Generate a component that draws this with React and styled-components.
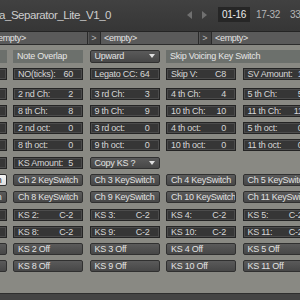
import React from "react";
import styled, { createGlobalStyle, css } from "styled-components";

const GlobalStyle = createGlobalStyle`
  html, body { margin: 0; padding: 0; background: #898983; overflow: hidden; }
`;

const Frame = styled.div`
  width: 300px;
  height: 300px;
  overflow: hidden;
  display: flex;
  flex-direction: column;
  background: #898983;
  font-family: "Liberation Sans", Arial, sans-serif;
`;

const Header = styled.header`
  flex: 0 0 31px;
  box-sizing: border-box;
  padding-bottom: 2px;
  display: flex;
  align-items: center;
  overflow: hidden;
  background: linear-gradient(#414141, #363636);
`;

const Title = styled.div`
  flex: 0 0 187px;
  margin-left: -1px;
  font-size: 11.5px;
  letter-spacing: -0.45px;
  color: #cdcdcd;
  white-space: nowrap;
`;

const Nav = styled.div`
  flex: none;
  display: flex;
  gap: 10px;
  margin-left: 1px;
  svg { display: block; }
`;

const Tabs = styled.div`
  flex: none;
  display: flex;
  gap: 2px;
  margin-left: 11px;
`;

const Tab = styled.div`
  flex: none;
  width: 32px;
  height: 15px;
  display: flex;
  align-items: center;
  justify-content: center;
  font-size: 10px;
  letter-spacing: -0.3px;
  color: ${(p) => (p.$active ? "#ececec" : "#b6b6b6")};
  background: ${(p) => (p.$active ? "#262626" : "transparent")};
`;

const PresetBar = styled.div`
  flex: 0 0 14px;
  box-sizing: border-box;
  display: flex;
  gap: 1px;
  margin-left: -10px;
  border-top: 1px solid #242424;
  border-bottom: 1px solid #2c2c2c;
  background: #2a2a2a;
`;

const PresetField = styled.div`
  flex: 0 0 97px;
  display: flex;
  align-items: center;
  padding-left: 3px;
  box-sizing: border-box;
  background: #5a5a5a;
  color: #e4e4e4;
  font-size: 9px;
  letter-spacing: -0.3px;
  white-space: nowrap;
`;

const PresetArrow = styled.div`
  flex: 0 0 12px;
  display: flex;
  align-items: center;
  justify-content: center;
  background: #444444;
  box-shadow: inset 1px 0 0 #585858;
  color: #b8b8b8;
  font-size: 9px;
`;

const Main = styled.main`
  flex: 1;
  padding-top: 5px;
  overflow: hidden;
`;

const Grid = styled.div`
  display: grid;
  grid-template-columns: repeat(5, 70px);
  column-gap: 6.5px;
  grid-auto-rows: ${(p) => p.$rowH};
  row-gap: ${(p) => p.$gap};
  margin-left: -63.5px;
  margin-top: ${(p) => p.$top || "0"};
`;

const cellBase = css`
  box-sizing: border-box;
  display: flex;
  align-items: center;
  font-size: 9px;
  letter-spacing: -0.25px;
  white-space: nowrap;
  overflow: hidden;
`;

const Value = styled.div`
  ${cellBase};
  justify-content: space-between;
  padding: 0 9px 0 4px;
  background: #363636;
  border: 1px solid #242424;
  box-shadow: inset 0 0 0 1px #4c4c4c;
  color: #d6d6d6;
`;

const Button = styled.div`
  ${cellBase};
  padding-left: 4px;
  border-radius: 2px;
  border: 1px solid #303030;
  background: linear-gradient(#5a5a5a, #474747);
  color: #e2e2e2;
  ${(p) =>
    p.$active &&
    css`
      background: linear-gradient(#f6f6f6, #dedede);
      color: #222;
    `}
`;

const Dropdown = styled(Button)`
  justify-content: space-between;
  padding-right: 4px;
`;

const Label = styled.div`
  ${cellBase};
  padding-left: 4px;
  background: #6c706c;
  color: #e6e6e6;
  ${(p) => p.$span && "grid-column: span 2;"}
`;

const Blank = styled.div``;

const Footer = styled.footer`
  flex: 0 0 7px;
  box-sizing: border-box;
  border-top: 1px solid #2e2e2e;
  background: #444444;
`;

const LeftTri = () => (
  <svg width="5" height="8" viewBox="0 0 5 8">
    <path d="M5 0 L0 4 L5 8 Z" fill="#707070" />
  </svg>
);
const RightTri = () => (
  <svg width="5" height="8" viewBox="0 0 5 8">
    <path d="M0 0 L5 4 L0 8 Z" fill="#707070" />
  </svg>
);
const DownTri = () => (
  <svg width="6" height="4" viewBox="0 0 6 4">
    <path d="M0 0 L6 0 L3 4 Z" fill="#e0e0e0" />
  </svg>
);

const V = ({ l, v }) => (
  <Value>
    <span>{l}</span>
    <span>{v}</span>
  </Value>
);

const ord = ["1 st", "2 nd", "3 rd", "4 th", "5 th"];
const ord2 = ["7 th", "8 th", "9 th", "10 th", "11 th"];
const n1 = [1, 2, 3, 4, 5];
const n2 = [7, 8, 9, 10, 11];

export default function App() {
  return (
    <>
      <GlobalStyle />
      <Frame>
        <Header>
          <Title>a_Separator_Lite_V1_0</Title>
          <Nav>
            <LeftTri />
            <RightTri />
          </Nav>
          <Tabs>
            <Tab $active>01-16</Tab>
            <Tab>17-32</Tab>
            <Tab>33-48</Tab>
          </Tabs>
        </Header>

        <PresetBar>
          <PresetField>&lt;empty&gt;</PresetField>
          <PresetArrow>&gt;</PresetArrow>
          <PresetField>&lt;empty&gt;</PresetField>
          <PresetArrow>&gt;</PresetArrow>
          <PresetField>&lt;empty&gt;</PresetField>
          <PresetArrow>&gt;</PresetArrow>
        </PresetBar>

        <Main>
          <Grid $rowH="12.5px" $gap="5px">
            <Label>Legato Mode</Label>
            <Label>Note Overlap</Label>
            <Dropdown>
              <span>Upward</span>
              <DownTri />
            </Dropdown>
            <Label $span>Skip Voicing Key Switch</Label>

            <V l="Velocity:" v="" />
            <V l="NO(ticks):" v="60" />
            <V l="Legato CC:" v="64" />
            <V l="Skip V:" v="C8" />
            <V l="SV Amount:" v="1" />
          </Grid>

          <Grid $rowH="12px" $gap="5.3px" $top="7.5px">
            {ord.map((o, i) => (
              <V key={"c" + i} l={`${o} Ch:`} v={n1[i]} />
            ))}
            {ord2.map((o, i) => (
              <V key={"d" + i} l={`${o} Ch:`} v={n2[i]} />
            ))}
            {ord.map((o, i) => (
              <V key={"o" + i} l={`${o} oct:`} v="0" />
            ))}
            {ord2.map((o, i) => (
              <V key={"p" + i} l={`${o} oct:`} v="0" />
            ))}

            <V l="Channels:" v="" />
            <V l="KS Amount:" v="5" />
            <Dropdown>
              <span>Copy KS ?</span>
              <DownTri />
            </Dropdown>
            <Blank />
            <Blank />

            {n1.map((n) => (
              <Button key={"k" + n} $active={n === 1}>
                Ch {n} KeySwitch
              </Button>
            ))}
            {n2.map((n) => (
              <Button key={"l" + n}>Ch {n} KeySwitch</Button>
            ))}
            {n1.map((n) => (
              <V key={"s" + n} l={`KS ${n}:`} v="C-2" />
            ))}
            {n2.map((n) => (
              <V key={"t" + n} l={`KS ${n}:`} v="C-2" />
            ))}
            {n1.map((n) => (
              <Button key={"f" + n}>KS {n} Off</Button>
            ))}
            {n2.map((n) => (
              <Button key={"g" + n}>KS {n} Off</Button>
            ))}
          </Grid>
        </Main>

        <Footer />
      </Frame>
    </>
  );
}
